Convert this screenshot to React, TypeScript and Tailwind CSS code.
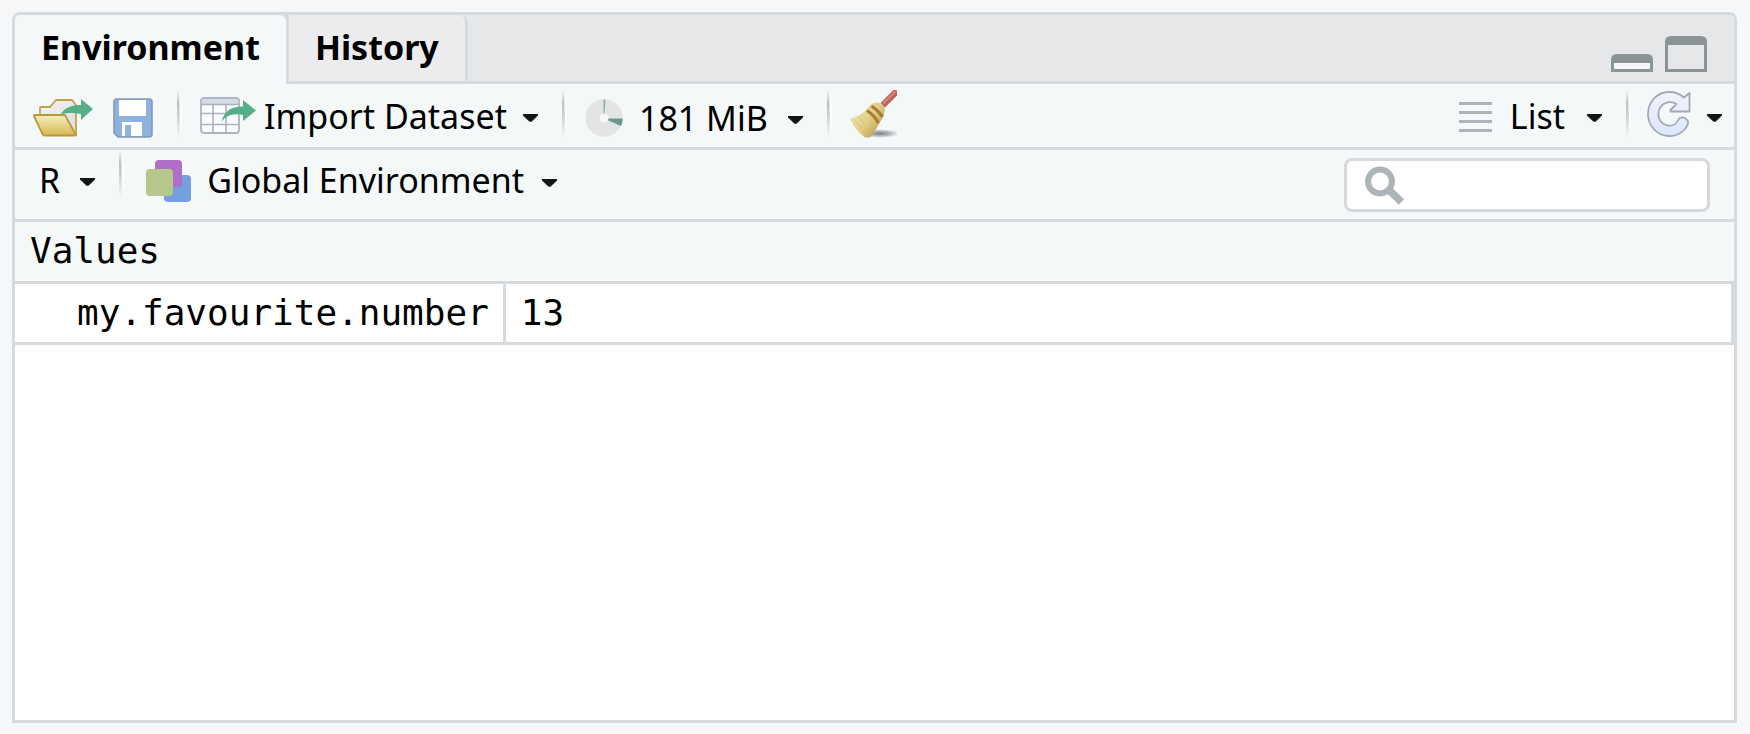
import type { ReactNode } from "react";

function Caret() {
  return (
    <svg width="15" height="8" viewBox="0 0 15 8" className="mt-1 shrink-0" aria-hidden="true">
      <path d="M0 0H15V1.5L9 7.2Q7.5 8.5 6 7.2L0 1.5Z" fill="#121314" />
    </svg>
  );
}

function Separator() {
  return (
    <span className="flex h-12 w-[5px] shrink-0" aria-hidden="true">
      <span className="w-[2px] bg-linear-to-b from-transparent via-[#bcbebf] via-30% to-transparent" />
      <span className="w-[1px] bg-linear-to-b from-transparent via-[#d8dadb] via-50% to-transparent" />
      <span className="w-[2px] bg-linear-to-b from-transparent via-white via-50% to-transparent" />
    </span>
  );
}

function OpenIcon() {
  return (
    <svg width="60" height="38" viewBox="0 0 60 38" aria-hidden="true">
      <defs>
        <linearGradient id="folder" x1="0" y1="0" x2="0" y2="1">
          <stop offset="0" stopColor="#f6eec0" />
          <stop offset="1" stopColor="#d9b750" />
        </linearGradient>
        <linearGradient id="paper" x1="0" y1="0" x2="1" y2="1">
          <stop offset="0" stopColor="#f4f4f4" />
          <stop offset="1" stopColor="#dcdcdc" />
        </linearGradient>
      </defs>
      <path d="M7 17V9Q7 8 8 8H17L22 2Q23 1 24 1H38Q39 1 40 2L43 6V36H40Z" fill="url(#paper)" stroke="#c3a24b" strokeWidth="1.800" />
      <path d="M1 17Q0.500 16 2 16H30Q32 16 32.500 17L42.500 35Q43 36.500 42 36.500H11Q10 36.500 9.500 35Z" fill="url(#folder)" stroke="#b9973d" strokeWidth="1.800" />
      <path d="M27.500 16C31 8 40 5.800 48 6V0L60 10L48 21V15C40 13.500 33 13.500 27.500 16Z" fill="#55b08a" />
    </svg>
  );
}

function SaveIcon() {
  return (
    <svg width="40" height="40" viewBox="0 0 40 40" aria-hidden="true">
      <path d="M4 1H36Q39 1 39 4V36Q39 39 36 39H5L1 35V4Q1 1 4 1Z" fill="#8db2df" stroke="#8299b8" strokeWidth="1.600" />
      <path d="M6 2H33V17Q33 18 32 18H7Q6 18 6 17Z" fill="#fff" />
      <path d="M9 38V25Q9 24 10 24H28Q29 24 29 25V38Z" fill="#fff" />
      <path d="M12 28Q12 27 13 27H18V38H12Z" fill="#8db2df" />
    </svg>
  );
}

function ImportIcon() {
  return (
    <svg width="56" height="38" viewBox="0 0 56 38" aria-hidden="true">
      <rect x="1" y="1" width="38" height="35" rx="3" fill="#fbfcff" stroke="#aab3c0" strokeWidth="1.800" />
      <path d="M1.800 7V4Q2 1.800 4 1.800H36Q38.200 1.800 38.200 4V7Z" fill="#d5dce7" />
      <path d="M1 7.500H39M1 16.500H39M1 27.500H39M13 7.500V36M26 7.500V36" stroke="#aab0c0" strokeWidth="1.600" fill="none" />
      <path d="M21.500 25C24 13 33 9.300 43 9.500V3L56 13.500L43 24V18C34 16 26 18 21.500 25Z" fill="#55b08a" />
    </svg>
  );
}

function MemoryIcon() {
  return (
    <svg width="38" height="38" viewBox="0 0 38 38" aria-hidden="true">
      <circle cx="19" cy="19" r="18.700" fill="#e4e4e4" />
      <path d="M18.500 15V0.500H20.500L19.500 15Z" fill="#91aba3" />
      <path d="M19 19.500H37.700Q37.500 24 36 27Z" fill="#6a978e" />
      <circle cx="19" cy="19" r="4.500" fill="#f4f8f9" />
    </svg>
  );
}

function BroomIcon() {
  return (
    <svg width="47" height="48" viewBox="0 0 47 48" aria-hidden="true">
      <defs>
        <linearGradient id="straw" x1="0.200" y1="0.300" x2="0.850" y2="0.800">
          <stop offset="0" stopColor="#ebdf9f" />
          <stop offset="0.500" stopColor="#dfcd84" />
          <stop offset="1" stopColor="#bfa257" />
        </linearGradient>
        <radialGradient id="shadow">
          <stop offset="0" stopColor="#75797c" stopOpacity="0.950" />
          <stop offset="0.600" stopColor="#95999c" stopOpacity="0.600" />
          <stop offset="1" stopColor="#b5b9bb" stopOpacity="0" />
        </radialGradient>
      </defs>
      <ellipse cx="30" cy="43.500" rx="20" ry="4.500" fill="url(#shadow)" />
      <path d="M30.500 13L43.500 0Q45 -0.500 47 0.500V5.500L35 17.500Z" fill="#bd6256" />
      <path d="M33 13.500L45.500 1.500" stroke="#d58a7e" strokeWidth="1.800" />
      <path d="M20 15C23 12.500 28 11.500 31 13.500L34.500 17C35.500 22 33 28 29.500 33C27 38 23 43 20 47.500H15C9 43 3 36 0 28.500C7 27 13 23.500 16 20Z" fill="url(#straw)" />
      <path d="M4 29C8 34 12 40 18 45M9 27C13 33 17 38 22 42" stroke="#cdb468" strokeWidth="1" opacity="0.500" fill="none" />
      <path d="M21.500 16C25 18.500 29.500 22 32.500 27M17 20.500C21 23 25.500 28 28.500 33" stroke="#aa7b34" strokeWidth="3.200" fill="none" />
    </svg>
  );
}

function ListIcon() {
  return (
    <svg width="33" height="30" viewBox="0 0 33 30" className="mt-[2px]" aria-hidden="true">
      <path d="M0 1.500H33M0 10.500H33M0 19.500H33M0 28.500H33" stroke="#adb3b8" strokeWidth="2.800" />
    </svg>
  );
}

function RefreshIcon() {
  return (
    <svg width="44" height="46" viewBox="0 0 44 46" aria-hidden="true">
      <defs>
        <linearGradient id="refresh" x1="0" y1="0" x2="0" y2="1">
          <stop offset="0" stopColor="#f0f3fb" />
          <stop offset="1" stopColor="#dde7fa" />
        </linearGradient>
      </defs>
      <path d="M42.500 2V20.500H23.500V19L29.500 13C24 9.500 17 11 13.500 16C9 23 12 31.500 19 34C25 36 29.500 33 31.500 28.500C33 25 38 26 40.500 29.500C42 32 40.500 35 38 38C33 43.500 27 45.500 21 45C9 44 1 34 1 23C1 10 11 1 22 1C28 1 33 3 37 6.500Z" fill="url(#refresh)" stroke="#a3a8b4" strokeWidth="1.800" strokeLinejoin="round" />
    </svg>
  );
}

function EnvironmentIcon() {
  return (
    <svg width="45" height="42" viewBox="0 0 45 42" aria-hidden="true">
      <rect x="18" y="15" width="27" height="27" rx="4" fill="#769fe0" />
      <rect x="9" y="0" width="27" height="27" rx="4" fill="#b06fc6" />
      <rect x="0" y="9" width="27" height="27" rx="4" fill="#b5c78a" />
    </svg>
  );
}

function SearchIcon() {
  return (
    <svg width="40" height="39" viewBox="0 0 40 39" className="shrink-0" aria-hidden="true">
      <circle cx="15" cy="15.500" r="12" fill="none" stroke="#adb4b8" strokeWidth="6" />
      <path d="M24 24L36.500 36" stroke="#adb4b8" strokeWidth="7.500" />
    </svg>
  );
}

function ToolButton({ label, className = "", children }: { label?: string; className?: string; children: ReactNode }) {
  return (
    <button type="button" aria-label={label} className={`flex shrink-0 items-center whitespace-nowrap ${className}`}>
      {children}
    </button>
  );
}

export default function App() {
  return (
    <div className="flex min-h-screen flex-col bg-[#f5f7f9] pt-3 pr-[13px] pb-[11px] pl-3 font-['Noto_Sans','Open_Sans',sans-serif] text-[34px] leading-10 text-black">
      <main className="flex grow flex-col overflow-hidden rounded-t-lg border-3 border-[#d6dadc] bg-white">
        <header className="flex h-[69px] bg-[#e6e7e9]">
          <div role="tablist" className="flex bg-[#d6dadc] font-bold">
            <button type="button" role="tab" aria-selected="true" className="rounded-tr-md bg-[#f4f8f9] px-[26px] pb-1.5">
              Environment
            </button>
            <div className="flex bg-[#e6e7e9]">
              <button type="button" role="tab" aria-selected="false" className="rounded-tr-lg border-x-3 border-b-3 border-[#d6dadc] bg-[#ececee] px-[26px] pb-[3px]">
                History
              </button>
            </div>
          </div>
          <div className="flex grow items-end justify-end gap-3 border-b-3 border-[#d6dadc] pr-[27px] pb-[9px]">
            <button type="button" aria-label="Minimize">
              <svg width="42" height="18" viewBox="0 0 42 18" className="block">
                <path d="M3 9H39V15H3Z" fill="#f4f8f9" />
                <path fillRule="evenodd" d="M0 18V6Q0 0 6 0H36Q42 0 42 6V18ZM3 9V15H39V9Z" fill="#8a9395" />
              </svg>
            </button>
            <button type="button" aria-label="Maximize">
              <svg width="42" height="36" viewBox="0 0 42 36" className="block">
                <path fillRule="evenodd" d="M0 36V6Q0 0 6 0H36Q42 0 42 6V36ZM3 9V33H39V9Z" fill="#8a9395" />
              </svg>
            </button>
          </div>
        </header>

        <div role="toolbar" aria-label="Workspace" className="flex h-[66px] items-center border-b-3 border-[#d6dadc] bg-[#f4f8f9] pr-3 pl-[18px]">
          <div className="flex items-center">
            <ToolButton label="Load workspace" className="pt-1"><OpenIcon /></ToolButton>
            <ToolButton label="Save workspace" className="ml-5 pt-1"><SaveIcon /></ToolButton>
            <span className="ml-6 pb-1"><Separator /></span>
            <ToolButton className="ml-[18px]">
              <ImportIcon />
              <span className="ml-2 mr-4">Import Dataset</span>
              <Caret />
            </ToolButton>
            <span className="ml-6 pb-1"><Separator /></span>
            <ToolButton className="ml-[18px] pt-1">
              <MemoryIcon />
              <span className="ml-4 mr-5">181 MiB</span>
              <Caret />
            </ToolButton>
            <span className="ml-6 pb-1"><Separator /></span>
            <ToolButton label="Clear objects" className="ml-[18px] pb-[3px]"><BroomIcon /></ToolButton>
          </div>
          <div className="ml-auto flex items-center">
            <ToolButton>
              <ListIcon />
              <span className="ml-[18px] mr-[22px]">List</span>
              <Caret />
            </ToolButton>
            <span className="ml-6 pb-1"><Separator /></span>
            <ToolButton label="Refresh" className="ml-4 pb-[3px]"><RefreshIcon /></ToolButton>
            <ToolButton label="Refresh options" className="ml-4"><Caret /></ToolButton>
          </div>
        </div>

        <div role="toolbar" aria-label="Scope" className="flex h-[72px] items-start border-b-3 border-[#d6dadc] bg-[#f4f8f9] pr-6 pl-6">
          <div className="flex items-center">
            <ToolButton className="pt-2">
              <span className="mr-5">R</span>
              <Caret />
            </ToolButton>
            <span className="ml-6 pb-1"><Separator /></span>
            <ToolButton className="ml-[22px] pt-[10px]">
              <EnvironmentIcon />
              <span className="ml-4 mr-[18px] pb-[2px]">Global Environment</span>
              <Caret />
            </ToolButton>
          </div>
          <label className="mt-2 ml-auto flex h-[54px] w-[366px] items-center rounded-lg border-3 border-[#d6dadc] bg-white pl-[18px]">
            <SearchIcon />
            <input type="search" aria-label="Search objects" className="w-full min-w-0 bg-transparent px-2 outline-none" />
          </label>
        </div>

        <table className="w-full border-separate border-spacing-0 font-['DejaVu_Sans_Mono',monospace] text-[36px] leading-[56px]">
          <tbody>
            <tr>
              <th colSpan={2} scope="colgroup" className="border-b-3 border-[#d6dadc] bg-[#f4f8f9] pt-[1px] pb-[2px] pl-[15px] text-left font-normal">
                Values
              </th>
            </tr>
            <tr>
              <th scope="row" className="w-px border-r-3 border-b-3 border-[#d6dadc] pt-[1px] pr-3.5 pb-[1px] pl-[62px] text-left font-normal whitespace-nowrap">
                my.favourite.number
              </th>
              <td className="border-r-3 border-b-3 border-[#d6dadc] pt-[1px] pb-[1px] pl-[15px]">13</td>
            </tr>
          </tbody>
        </table>
      </main>
    </div>
  );
}
